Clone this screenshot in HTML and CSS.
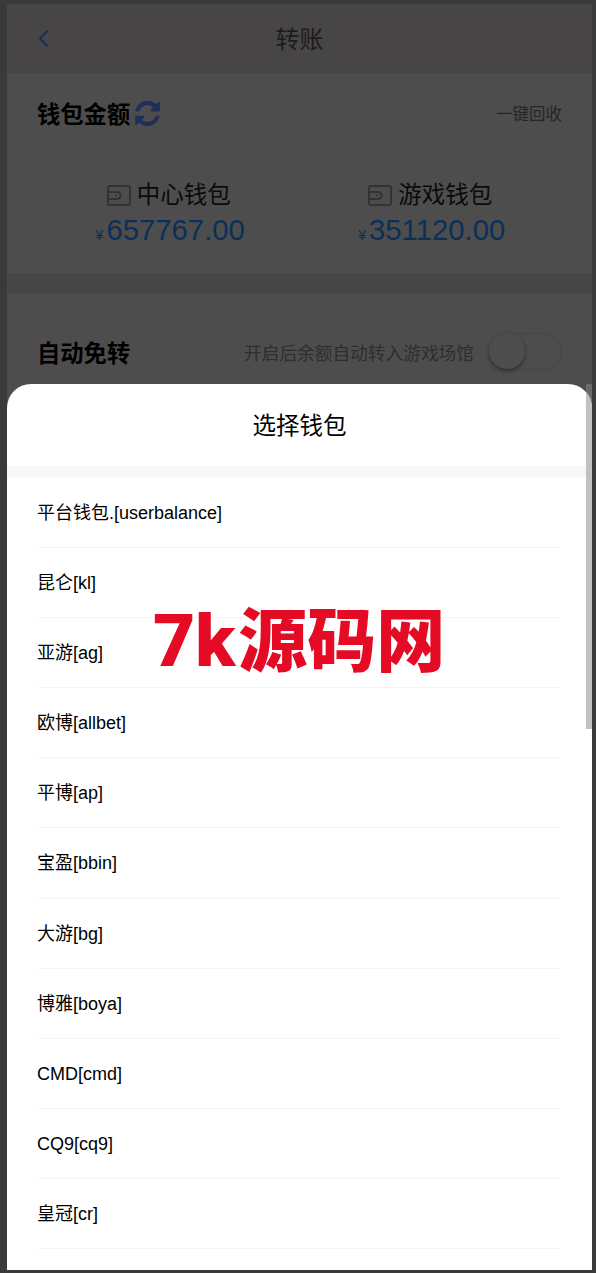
FILE: index.html
```html
<!DOCTYPE html>
<html lang="zh-CN">
<head>
  <meta charset="UTF-8">
  <meta name="viewport" content="width=device-width, initial-scale=1.0">
  <title>转账</title>
  <link rel="stylesheet" href="styles.css">
</head>
<body>
  <div class="page">
    <header class="top-bar">
      <svg class="back-icon" viewBox="0 0 12 20" width="11" height="19"><path d="M10.500 1.500 2 10l8.500 8.500" fill="none" stroke="#0b3058" stroke-width="1.800"/></svg>
      <h1>转账</h1>
    </header>

    <section class="wallets">
      <div class="wallets-head">
        <div class="wallets-title">
          <h2>钱包金额</h2>
          <svg class="refresh-icon" viewBox="0 0 1536 1536" width="25" height="25"><path fill="#222e57" d="M1511 928c0 5 0 8-1 10-43 179-132 324-267 435-135 110-293 165-474 165-96 0-190-18-280-55-91-36-172-88-243-156L117 1456c-13 13-27 19-45 19s-32-6-45-19-19-27-19-45V963c0-17 6-32 19-45s27-19 45-19h448c17 0 32 6 45 19s19 28 19 45-6 32-19 45l-137 137c47 44 101 78 161 102s122 36 186 36c90 0 173-22 250-65 77-44 139-104 185-181 7-12 25-50 52-114 5-15 15-22 29-22h192c9 0 16 3 23 9 6 7 9 14 9 23zM1536 128v448c0 17-6 32-19 45s-28 19-45 19h-448c-17 0-32-6-45-19s-19-28-19-45 6-32 19-45l138-138C1018 298 898 251 768 251c-90 0-173 22-250 65-77 44-139 104-185 181-7 12-25 50-52 114-5 15-15 22-29 22H53c-9 0-16-3-23-9-6-7-9-14-9-23v-7c43-179 133-324 269-435C426 48 585-7 768-7c96 0 190 18 282 55 91 36 172 88 243 156l130-129c13-13 27-19 45-19s32 6 45 19 19 27 19 45z"/></svg>
        </div>
        <span class="recycle">一键回收</span>
      </div>
      <div class="wallets-body">
        <div class="wallet">
          <div class="wallet-name">
            <svg class="wallet-icon" viewBox="0 0 24 21" width="24" height="21"><rect x="1" y="1" width="22" height="19" rx="2" fill="none" stroke="#333" stroke-width="2"/><path d="M1 7h9a3.500 3.500 0 0 1 0 7H1" fill="none" stroke="#333" stroke-width="2"/><circle cx="9" cy="10.500" r="1" fill="#333"/></svg>
            <span>中心钱包</span>
          </div>
          <div class="wallet-amount"><small>¥</small>657767.00</div>
        </div>
        <div class="wallet">
          <div class="wallet-name">
            <svg class="wallet-icon" viewBox="0 0 24 21" width="24" height="21"><rect x="1" y="1" width="22" height="19" rx="2" fill="none" stroke="#333" stroke-width="2"/><path d="M1 7h9a3.500 3.500 0 0 1 0 7H1" fill="none" stroke="#333" stroke-width="2"/><circle cx="9" cy="10.500" r="1" fill="#333"/></svg>
            <span>游戏钱包</span>
          </div>
          <div class="wallet-amount"><small>¥</small>351120.00</div>
        </div>
      </div>
    </section>

    <section class="auto-transfer">
      <h2>自动免转</h2>
      <div class="auto-right">
        <span class="auto-hint">开启后余额自动转入游戏场馆</span>
        <div class="toggle"><div class="toggle-knob"></div></div>
      </div>
    </section>

    <div class="page-scroll-thumb"></div>

    <!-- Wallet picker sheet -->
    <div class="sheet">
      <div class="sheet-title">选择钱包</div>
      <ul class="wallet-list">
        <li>平台钱包.[userbalance]</li>
        <li>昆仑[kl]</li>
        <li>亚游[ag]</li>
        <li>欧博[allbet]</li>
        <li>平博[ap]</li>
        <li>宝盈[bbin]</li>
        <li>大游[bg]</li>
        <li>博雅[boya]</li>
        <li>CMD[cmd]</li>
        <li>CQ9[cq9]</li>
        <li>皇冠[cr]</li>
      </ul>
      <div class="scroll-thumb"></div>
    </div>

    <div class="watermark"><span class="watermark-latin">7k</span>源码网</div>
  </div>
</body>
</html>
```

FILE: styles.css
```css
html, body {
  height: 100%;
}

body {
  margin: 0;
  padding: 4px 4px 3px 7px;
  box-sizing: border-box;
  background-color: #3a3a3a;
  font-family: "Liberation Sans", "Noto Sans CJK SC", sans-serif;
  color: #000;
}

h1, h2, ul {
  margin: 0;
  padding: 0;
}

.page {
  position: relative;
  height: 100%;
  overflow: hidden;
  background-color: #464646;
}

.top-bar {
  position: relative;
  height: 69px;
  box-sizing: border-box;
  padding-bottom: 3px;
  display: flex;
  align-items: center;
  justify-content: center;
  background-color: #474546;
}

.top-bar h1 {
  font-size: 24px;
  font-weight: 400;
  color: #1c1c1c;
}

.back-icon {
  position: absolute;
  left: 31px;
  top: 25px;
}

.wallets {
  height: 200px;
  background-color: #4d4d4d;
}

.wallets-head {
  height: 81px;
  padding: 0 30px;
  display: flex;
  align-items: center;
  justify-content: space-between;
  border-bottom: 1px solid #4a4a4a;
  box-sizing: border-box;
}

.wallets-title {
  display: flex;
  align-items: center;
  gap: 5px;
}

.wallets h2,
.auto-transfer h2 {
  font-size: 23.300px;
  font-weight: 700;
}

.recycle {
  font-size: 16.500px;
  color: #262626;
}

.wallets-body {
  display: flex;
  padding: 26px 31px 0;
}

.wallet {
  flex: 1;
  display: flex;
  flex-direction: column;
  align-items: center;
}

.wallet-name {
  display: flex;
  align-items: center;
  gap: 6px;
  font-size: 23.500px;
  line-height: 30px;
  color: #0a0a0a;
}

.wallet-amount {
  margin: 3px 0 0 3px;
  font-size: 29.300px;
  line-height: 34px;
  color: #0b3058;
}

.wallet-amount small {
  font-size: 14px;
  margin-right: 3px;
}

.auto-transfer {
  margin-top: 20px;
  height: 977px;
  padding: 40px 30px 0;
  box-sizing: border-box;
  display: flex;
  align-items: flex-start;
  justify-content: space-between;
  background-color: #4d4d4d;
}

.auto-transfer h2 {
  margin-top: 2px;
}

.auto-right {
  display: flex;
  align-items: center;
  gap: 15px;
}

.auto-hint {
  font-size: 17.700px;
  color: #2e2e2e;
}

.toggle {
  position: relative;
  width: 73px;
  height: 37px;
  box-sizing: border-box;
  border: 1px solid #464646;
  border-radius: 19px;
}

.toggle-knob {
  position: absolute;
  left: -1px;
  top: -1px;
  width: 36px;
  height: 36px;
  border-radius: 50%;
  background-color: #4d4d4d;
  box-shadow: 0 2px 4px rgba(0, 0, 0, 0.4);
}

.page-scroll-thumb {
  position: absolute;
  top: 380px;
  right: 0;
  width: 6px;
  height: 30px;
  background-color: #6a6a6a;
}

.sheet {
  position: absolute;
  left: 0;
  right: 0;
  bottom: 0;
  top: 380px;
  background-color: #fff;
  border-radius: 24px 24px 0 0;
  overflow: hidden;
}

.sheet-title {
  height: 82px;
  line-height: 84px;
  text-align: center;
  font-size: 23.500px;
  border-bottom: 11px solid #f7f7f7;
}

.wallet-list {
  list-style: none;
  margin: 1px 31px 0 30px;
}

.wallet-list li {
  height: 70.100px;
  line-height: 70px;
  box-sizing: border-box;
  border-bottom: 1px solid #f5f5f5;
  font-size: 18px;
}

.scroll-thumb {
  position: absolute;
  top: 0;
  right: 0;
  width: 6px;
  height: 345px;
  background-color: #c1c1c1;
}

.watermark {
  position: absolute;
  left: 146px;
  top: 592px;
  font-family: "Noto Sans CJK SC", sans-serif;
  font-size: 69px;
  line-height: 80px;
  font-weight: 900;
  color: #e60b25;
  white-space: nowrap;
}

.watermark-latin {
  font-family: Roboto, sans-serif;
  font-size: 73px;
  font-weight: 900;
  margin-right: 3px;
}
```
